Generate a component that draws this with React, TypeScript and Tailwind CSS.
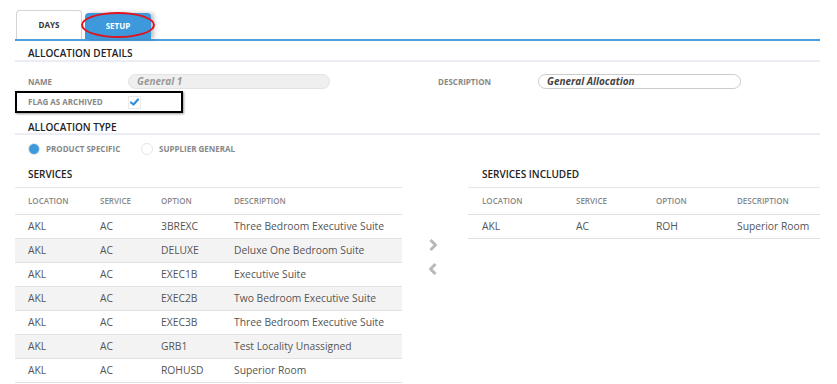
import React from "react";

const leftRows = [
  ["AKL", "AC", "3BREXC", "Three Bedroom Executive Suite"],
  ["AKL", "AC", "DELUXE", "Deluxe One Bedroom Suite"],
  ["AKL", "AC", "EXEC1B", "Executive Suite"],
  ["AKL", "AC", "EXEC2B", "Two Bedroom Executive Suite"],
  ["AKL", "AC", "EXEC3B", "Three Bedroom Executive Suite"],
  ["AKL", "AC", "GRB1", "Test Locality Unassigned"],
  ["AKL", "AC", "ROHUSD", "Superior Room"],
];

const font = { fontFamily: '"Open Sans", "Noto Sans", sans-serif' };

export default function App() {
  return (
    <div className="w-[837px] h-[384px] bg-white overflow-hidden relative text-[#555]" style={font}>
      {/* Tabs */}
      <div className="pt-[10px] pl-[16px] pr-[17px]">
        <div className="flex items-end gap-[3px] h-[29px] relative">
          <div className="w-[66px] h-[29px] border border-b-0 border-[#d4d4d4] rounded-t-[4px] flex items-center justify-center text-[8px] font-bold text-[#333]">
            DAYS
          </div>
          <div className="w-[66px] h-[26px] bg-[#3d98dc] rounded-t-[4px] flex items-center justify-center text-[8px] font-bold text-white shadow-[3px_0_4px_rgba(0,0,0,0.25)]">
            SETUP
          </div>
          <div className="absolute left-[65px] top-[2px] w-[74px] h-[26px] rounded-[50%] border-2 border-[#e0141e]" />
        </div>
        <div className="h-[2px] bg-[#4a9fe0] -ml-[1px]" />
      </div>

      <div className="pl-[15px] pr-[17px]">
        {/* Allocation details */}
        <div className="h-[21px] border-b-2 border-[#ececf4] pl-[13px] flex items-end pb-[2px] text-[10px] font-semibold text-[#222] leading-none">
          ALLOCATION DETAILS
        </div>
        <div className="flex items-center h-[19px] mt-[10px] pl-[13px]">
          <div className="w-[100px] text-[8px] font-bold text-[#888]">NAME</div>
          <div className="w-[202px] h-[15px] rounded-full bg-[#efefef] border border-[#e2e2e2] pl-[8px] flex items-center text-[10px] font-bold italic text-[#999]">
            General 1
          </div>
          <div className="ml-[108px] w-[100px] text-[8px] font-bold text-[#888]">DESCRIPTION</div>
          <div className="w-[203px] h-[15px] rounded-full bg-white border border-[#ccc] pl-[8px] flex items-center text-[10px] font-bold italic text-[#444]">
            General Allocation
          </div>
        </div>
        <div className="relative flex items-center h-[20px] mt-[1px] pl-[13px]">
          <div className="w-[100px] text-[8px] font-bold text-[#888]">FLAG AS ARCHIVED</div>
          <div className="w-[13px] h-[13px] border border-[#ebebeb] bg-white flex items-center justify-center">
            <svg width="9" height="8" viewBox="0 0 9 8">
              <path d="M1 4.5 L3.5 6.5 L8 1.5" stroke="#2f8fdc" strokeWidth="2.2" fill="none" strokeLinecap="round" strokeLinejoin="round" />
            </svg>
          </div>
          <div className="absolute left-0 top-[-1px] w-[168px] h-[22px] border-2 border-black shadow-[1px_1px_2px_rgba(0,0,0,0.4)]" />
        </div>

        {/* Allocation type */}
        <div className="h-[23px] border-b-2 border-[#ececf4] pl-[13px] flex items-end pb-[1px] text-[10px] font-semibold text-[#222] leading-none">
          ALLOCATION TYPE
        </div>
        <div className="flex items-center h-[16px] mt-[6px] pl-[13px]">
          <div className="w-[12px] h-[12px] rounded-full bg-[#3d98dc] border border-[#e8e8e8]" />
          <div className="ml-[6px] w-[95px] text-[8px] font-bold text-[#888]">PRODUCT SPECIFIC</div>
          <div className="w-[12px] h-[12px] rounded-full bg-white border border-[#e4e4e4]" />
          <div className="ml-[6px] text-[8px] font-bold text-[#888]">SUPPLIER GENERAL</div>
        </div>

        {/* Tables */}
        <div className="flex mt-[11px]">
          <div className="w-[387px]">
            <div className="h-[20px] border-b border-[#e6e6e6] pl-[13px] flex items-start text-[10px] font-semibold text-[#222] leading-[12px]">
              SERVICES
            </div>
            <div className="h-[27px] border-b border-[#e2e2e2] flex items-center pl-[13px] text-[8px] font-semibold text-[#888]">
              <div className="w-[72px]">LOCATION</div>
              <div className="w-[61px]">SERVICE</div>
              <div className="w-[73px]">OPTION</div>
              <div>DESCRIPTION</div>
            </div>
            {leftRows.map((r, i) => (
              <div
                key={i}
                className={`h-[24px] border-b border-[#e2e2e2] flex items-center pl-[13px] text-[10.3px] text-[#555] ${i % 2 === 1 ? "bg-[#f3f3f3]" : "bg-white"}`}
              >
                <div className="w-[72px]">{r[0]}</div>
                <div className="w-[61px]">{r[1]}</div>
                <div className="w-[73px]">{r[2]}</div>
                <div>{r[3]}</div>
              </div>
            ))}
          </div>
          <div className="w-[66px] flex flex-col items-center pt-[70px]">
            <div className="flex flex-col gap-[10px] items-center ml-[-4px]">
              <svg width="10" height="14" viewBox="0 0 10 14">
                <path d="M2.5 2 L7.5 7 L2.5 12" stroke="#b8b8b8" strokeWidth="3" fill="none" strokeLinejoin="round" />
              </svg>
              <svg width="10" height="14" viewBox="0 0 10 14">
                <path d="M7.5 2 L2.5 7 L7.5 12" stroke="#b8b8b8" strokeWidth="3" fill="none" strokeLinejoin="round" />
              </svg>
            </div>
          </div>
          <div className="w-[352px]">
            <div className="h-[20px] border-b border-[#e6e6e6] pl-[14px] flex items-start text-[10px] font-semibold text-[#222] leading-[12px]">
              SERVICES INCLUDED
            </div>
            <div className="h-[27px] border-b border-[#e2e2e2] flex items-center pl-[14px] text-[8px] font-semibold text-[#888]">
              <div className="w-[94px]">LOCATION</div>
              <div className="w-[80px]">SERVICE</div>
              <div className="w-[81px]">OPTION</div>
              <div>DESCRIPTION</div>
            </div>
            <div className="h-[24px] border-b border-[#e2e2e2] flex items-center pl-[14px] text-[10.3px] text-[#555]">
              <div className="w-[94px]">AKL</div>
              <div className="w-[80px]">AC</div>
              <div className="w-[81px]">ROH</div>
              <div>Superior Room</div>
            </div>
          </div>
        </div>
      </div>
    </div>
  );
}
